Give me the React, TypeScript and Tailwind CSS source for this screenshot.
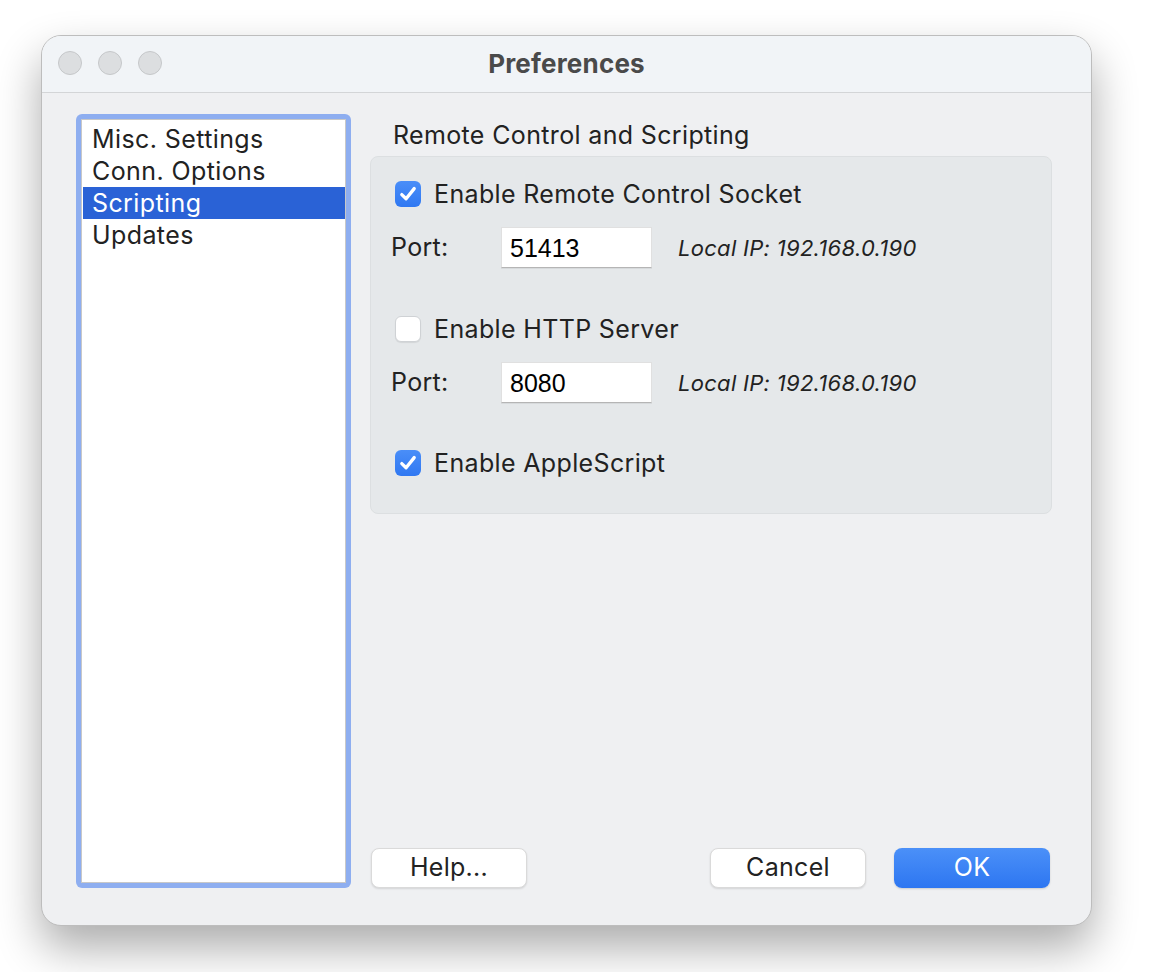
import React from 'react';

const ui = { fontFamily: 'Inter, "Noto Sans", sans-serif' };
const helv = { fontFamily: '"Liberation Sans", Arial, sans-serif' };

function Check({ on }: { on: boolean }) {
  if (!on) {
    return <div className="w-[26px] h-[26px] rounded-[6px] bg-white border border-[#cfd2d5] shadow-[0_1px_1px_rgba(0,0,0,0.08)]" />;
  }
  return (
    <div className="w-[26px] h-[26px] rounded-[6px] bg-gradient-to-b from-[#4a8ef8] to-[#2f78f2] flex items-center justify-center">
      <svg width="20" height="20" viewBox="0 0 20 20" fill="none">
        <path d="M3.8 10.6 L8.1 14.8 L16.2 4.6" stroke="white" strokeWidth="3.3" strokeLinecap="round" strokeLinejoin="round" />
      </svg>
    </div>
  );
}

function PortRow({ value }: { value: string }) {
  return (
    <div className="flex items-center h-[41px]">
      <span className="w-[130px] pl-[20px] pt-[1px] text-[25px] tracking-[0.3px] text-[#222]">Port:</span>
      <div
        className="w-[151px] h-[41px] bg-white border border-[#e0e0e0] border-b-[#b5b5b5] shadow-[0_1px_0_rgba(0,0,0,0.06)] pl-[8px] pt-[3px] flex items-center text-[25px] text-black"
        style={helv}
      >
        {value}
      </div>
      <span className="ml-[26px] pt-[1px] italic text-[22px] tracking-[0.3px] text-[#222]">Local IP: 192.168.0.190</span>
    </div>
  );
}

function Btn({ label, primary }: { label: string; primary?: boolean }) {
  return (
    <div
      className={
        primary
          ? 'w-[156px] h-[40px] rounded-[8px] bg-gradient-to-b from-[#4b90f8] to-[#2d76f1] text-white flex items-center justify-center text-[25px] tracking-[0.3px] shadow-[0_1px_2px_rgba(0,0,0,0.15)]'
          : 'w-[156px] h-[40px] rounded-[8px] bg-white border border-[#dadada] text-[#222] flex items-center justify-center text-[25px] tracking-[0.3px] shadow-[0_1px_2px_rgba(0,0,0,0.12)]'
      }
    >
      {label}
    </div>
  );
}

function App() {
  const items = ['Misc. Settings', 'Conn. Options', 'Scripting', 'Updates'];
  return (
    <div className="min-h-screen bg-white pt-[35px] pl-[41px]" style={ui}>
      <div className="w-[1051px] h-[891px] rounded-[20px] bg-[#eff0f2] border border-[#bdbdbd] shadow-[0_22px_45px_rgba(0,0,0,0.33)] flex flex-col overflow-hidden">
        {/* Title bar */}
        <div className="h-[57px] shrink-0 bg-[#f1f4f7] border-b border-[#d3d5d7] relative flex items-center justify-center">
          <div className="absolute left-[16px] top-[15px] flex gap-[16px]">
            <div className="w-[24px] h-[24px] rounded-full bg-[#dcdee0] border border-[#c5c7c9]" />
            <div className="w-[24px] h-[24px] rounded-full bg-[#dcdee0] border border-[#c5c7c9]" />
            <div className="w-[24px] h-[24px] rounded-full bg-[#dcdee0] border border-[#c5c7c9]" />
          </div>
          <span className="pb-[2px] text-[26px] font-bold tracking-[0.2px] text-[#4a4a4a]">Preferences</span>
        </div>

        {/* Body */}
        <div className="flex-1 flex pl-[34px] pr-[39px] pt-[21px] pb-[37px] gap-[19px]">
          <div className="w-[275px] shrink-0 rounded-[6px] bg-[#8eaef0] p-[5px]">
            <div className="h-full bg-white border border-[#c8c8c8] pt-[3px] pl-[1px]">
              {items.map((it) => (
                <div
                  key={it}
                  className={
                    it === 'Scripting'
                      ? 'h-[32px] pl-[9px] pt-[2px] flex items-center text-[25px] tracking-[0.4px] bg-[#2a62d6] text-white'
                      : 'h-[32px] pl-[9px] pt-[2px] flex items-center text-[25px] tracking-[0.4px] text-[#222]'
                  }
                >
                  {it}
                </div>
              ))}
            </div>
          </div>

          <div className="flex-1 flex flex-col">
            <div className="h-[42px] pl-[23px] pt-[1px] flex items-center text-[25px] tracking-[0.35px] text-[#222]">Remote Control and Scripting</div>
            <div className="h-[358px] rounded-[8px] bg-[#e5e8ea] border border-[#dcdfe1] pt-[24px]">
              <div className="flex items-center gap-[13px] pl-[24px] h-[26px] text-[25px] tracking-[0.35px] text-[#222]">
                <Check on />
                <span className="pt-[2px]">Enable Remote Control Socket</span>
              </div>
              <div className="mt-[20px]">
                <PortRow value="51413" />
              </div>
              <div className="mt-[48px] flex items-center gap-[13px] pl-[24px] h-[26px] text-[25px] tracking-[0.35px] text-[#222]">
                <Check on={false} />
                <span className="pt-[2px]">Enable HTTP Server</span>
              </div>
              <div className="mt-[20px]">
                <PortRow value="8080" />
              </div>
              <div className="mt-[47px] flex items-center gap-[13px] pl-[24px] h-[26px] text-[25px] tracking-[0.35px] text-[#222]">
                <Check on />
                <span className="pt-[2px]">Enable AppleScript</span>
              </div>
            </div>
            <div className="flex-1" />
            <div className="flex items-center pl-[1px]">
              <Btn label="Help..." />
              <div className="flex-1" />
              <Btn label="Cancel" />
              <div className="w-[28px]" />
              <Btn label="OK" primary />
              <div className="w-[2px]" />
            </div>
          </div>
        </div>
      </div>
    </div>
  );
}

export default App;
